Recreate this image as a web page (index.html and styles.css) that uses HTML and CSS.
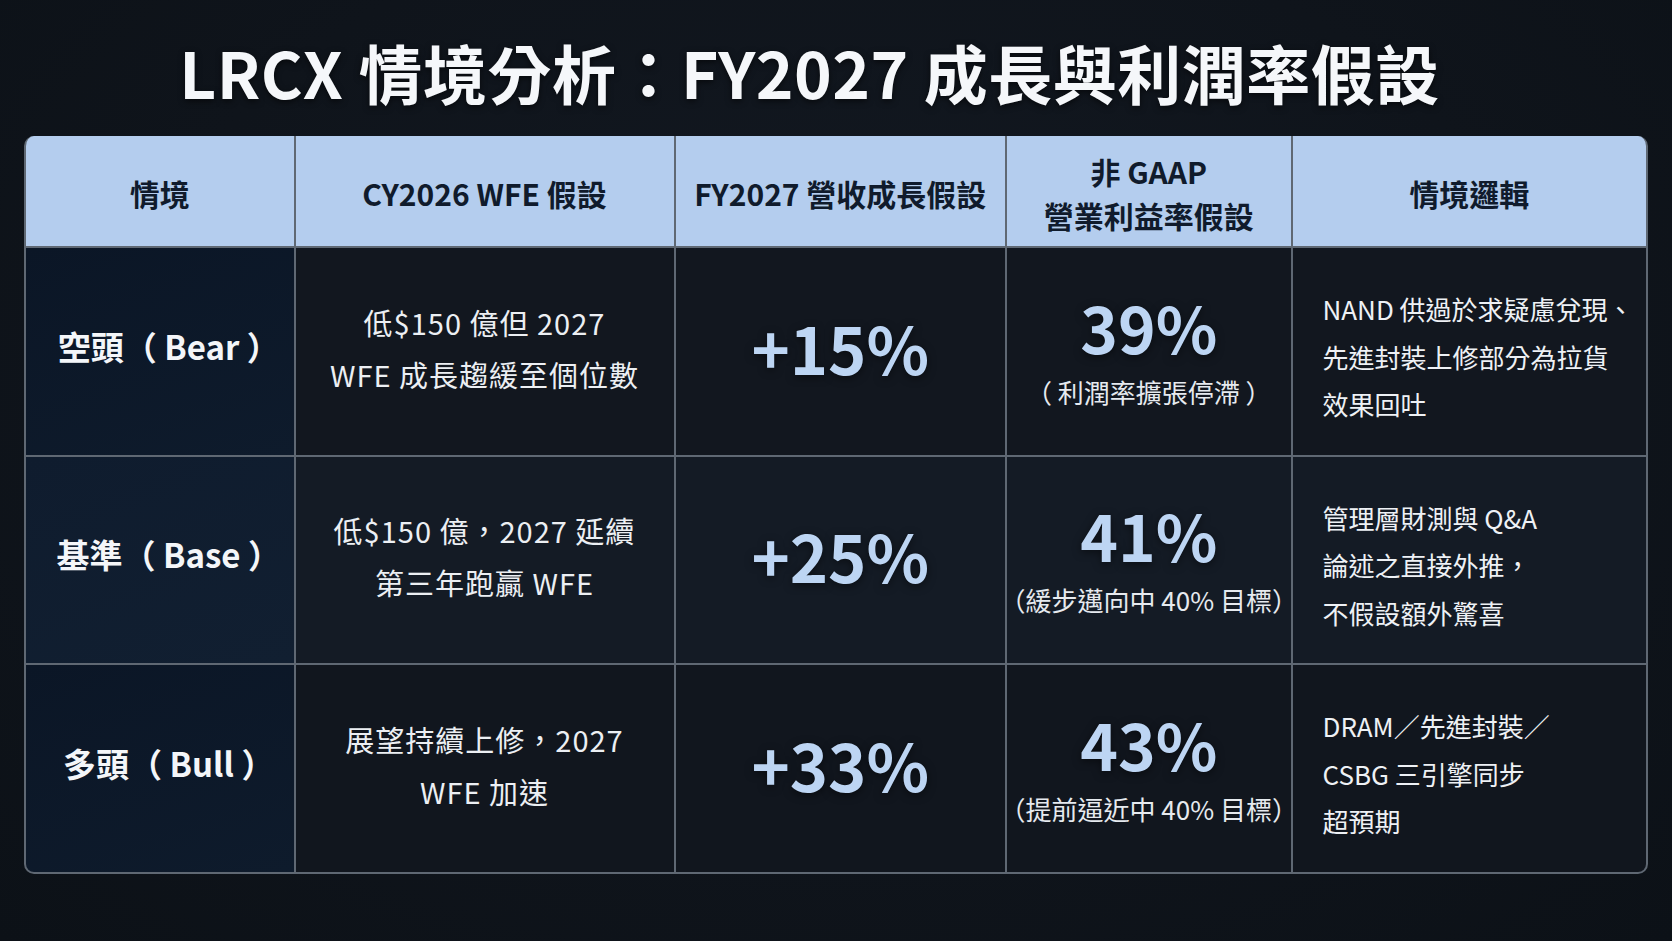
FILE: index.html
```html
<!DOCTYPE html>
<html lang="zh-Hant">
<head>
<meta charset="utf-8">
<title>LRCX 情境分析</title>
<link rel="stylesheet" href="styles.css">
</head>
<body>
<main class="page">
  <h1 class="title">LRCX 情境分析：FY2027 成長與利潤率假設</h1>
  <div class="table">
    <div class="th">情境</div>
    <div class="th">CY2026 WFE 假設</div>
    <div class="th">FY2027 營收成長假設</div>
    <div class="th">非 GAAP<br>營業利益率假設</div>
    <div class="th">情境邏輯</div>

    <div class="td name r1">空頭（ Bear ）</div>
    <div class="td wfe r1">低$150 億但 2027<br>WFE 成長趨緩至個位數</div>
    <div class="td growth r1">+15%</div>
    <div class="td margin r1"><span class="big">39%</span><span class="note">（ 利潤率擴張停滯 ）</span></div>
    <div class="td logic r1">NAND 供過於求疑慮兌現、<br>先進封裝上修部分為拉貨<br>效果回吐</div>

    <div class="td name r2">基準（ Base ）</div>
    <div class="td wfe r2">低$150 億，2027 延續<br>第三年跑贏 WFE</div>
    <div class="td growth r2">+25%</div>
    <div class="td margin r2"><span class="big">41%</span><span class="note">（緩步邁向中 40% 目標）</span></div>
    <div class="td logic r2">管理層財測與 Q&amp;A<br>論述之直接外推，<br>不假設額外驚喜</div>

    <div class="td name r3">多頭（ Bull ）</div>
    <div class="td wfe r3">展望持續上修，2027<br>WFE 加速</div>
    <div class="td growth r3">+33%</div>
    <div class="td margin r3"><span class="big">43%</span><span class="note">（提前逼近中 40% 目標）</span></div>
    <div class="td logic r3">DRAM／先進封裝／<br>CSBG 三引擎同步<br>超預期</div>
  </div>
</main>
</body>
</html>
```

FILE: styles.css
```css
html, body {
  margin: 0;
  padding: 0;
}

body {
  width: 1672px;
  height: 941px;
  overflow: hidden;
  background: radial-gradient(ellipse at 50% 40%, #131922 0%, #0f141b 60%, #0c1117 100%);
  font-family: "Noto Sans CJK TC", "Noto Sans", sans-serif;
  color: #eef1f5;
}

.page {
  padding: 34px 23px 0 24px;
}

.title {
  margin: 0 0 28px 0;
  height: 74px;
  line-height: 74px;
  font-size: 64px;
  font-weight: 700;
  text-align: center;
  color: #f5f7fa;
  letter-spacing: 0.5px;
  text-shadow: 0 2px 6px rgba(0, 0, 0, 0.6);
  padding-right: 54px;
}

.table {
  display: grid;
  grid-template-columns: 267.5px 378px 329.5px 283.5px 353.5px;
  grid-template-rows: 110px 207px 206px 207px;
  gap: 2px;
  background: #5f6873;
  border: 2px solid #5f6873;
  border-top: 0;
  border-radius: 10px;
  overflow: hidden;
  width: 1620px;
}

.th {
  background: #b4cdee;
  color: #101b2c;
  font-weight: 700;
  font-size: 30px;
  line-height: 44px;
  display: flex;
  align-items: center;
  justify-content: center;
  text-align: center;
  padding-top: 3px;
}

.td {
  display: flex;
  align-items: center;
  justify-content: center;
  text-align: center;
  background: #12171f;
}

.td.r2 {
  background: #141b25;
}

.td.r3 {
  background: #11161e;
}

.td.name {
  background: linear-gradient(160deg, #0b1626 0%, #0e1b2c 100%);
  font-size: 33px;
  font-weight: 700;
  color: #f4f6f9;
  white-space: nowrap;
  padding-bottom: 12px;
  padding-left: 18px;
}

.td.name.r2 {
  background: linear-gradient(160deg, #0f1c2e 0%, #111f31 100%);
}

.td.wfe {
  font-size: 29px;
  line-height: 52px;
  letter-spacing: 1px;
  color: #eceff3;
  padding-bottom: 8px;
  white-space: nowrap;
}

.td.growth {
  font-size: 65px;
  font-weight: 700;
  color: #bdd5f3;
  text-shadow: 0 2px 8px rgba(0, 0, 0, 0.5);
  padding-bottom: 10px;
}

.td.margin {
  flex-direction: column;
  padding-bottom: 8px;
}

.big {
  display: block;
  font-size: 64px;
  font-weight: 700;
  line-height: 80px;
  color: #bdd5f3;
  text-shadow: 0 2px 8px rgba(0, 0, 0, 0.5);
}

.note {
  display: block;
  margin-top: 8px;
  font-size: 26px;
  line-height: 36px;
  color: #e6eaef;
  white-space: nowrap;
}

.td.logic {
  justify-content: flex-start;
  text-align: left;
  padding-left: 30px;
  padding-top: 10px;
  font-size: 26px;
  line-height: 47.5px;
  color: #eef1f5;
  white-space: nowrap;
}
```
